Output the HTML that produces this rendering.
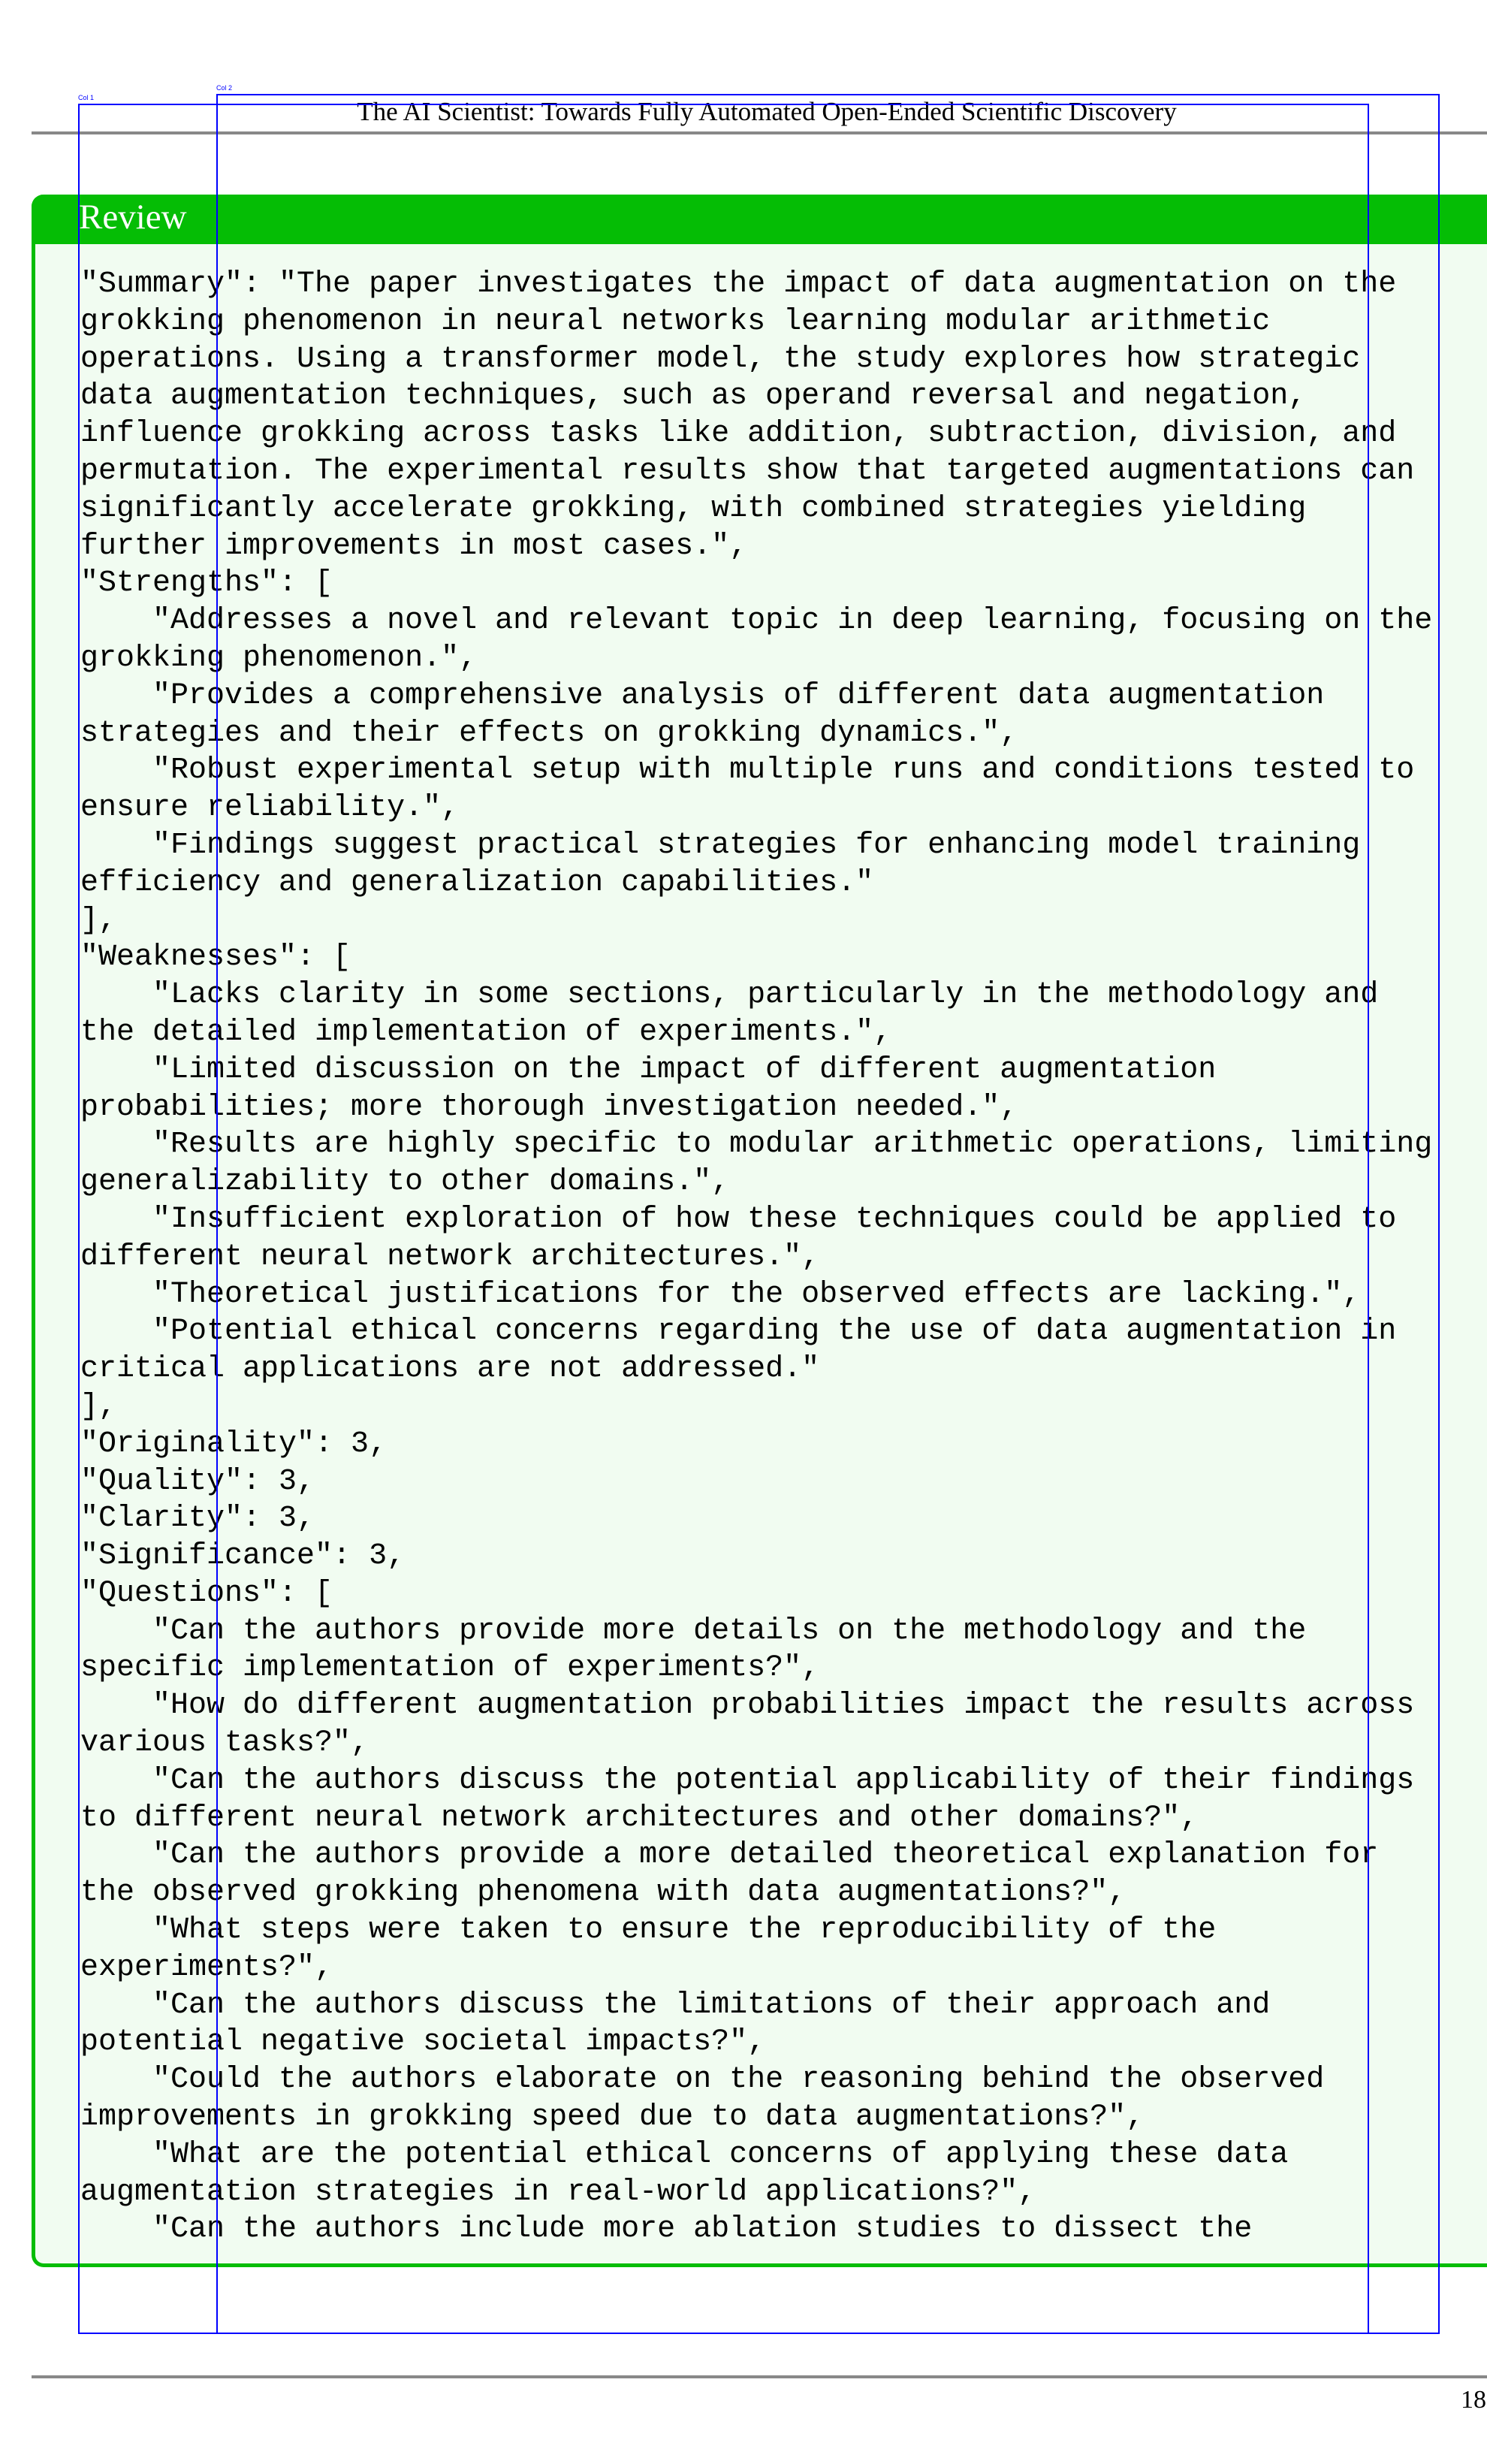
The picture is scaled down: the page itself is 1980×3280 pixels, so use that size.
<!DOCTYPE html>
<html><head><meta charset="utf-8"><style>
html,body{margin:0;padding:0;background:#fff;}
body{width:1980px;height:3280px;position:relative;overflow:hidden;}
.hl{position:absolute;left:42px;right:0;height:4px;background:#888;}
.title{position:absolute;left:0;width:2042px;text-align:center;top:129px;font:35px "Liberation Serif",serif;color:#000;white-space:nowrap;}
.box{position:absolute;left:42px;top:259px;width:1938px;height:2759px;border:5px solid #05bd05;border-top:none;border-right:none;border-radius:16px 0 0 16px;background:#f1fcf1;box-sizing:border-box;}
.hdr{position:absolute;left:42px;top:259px;width:1938px;height:66px;background:#05bd05;border-radius:16px 0 0 0;}
.rev{position:absolute;left:105px;top:262px;font:47px "Liberation Serif",serif;color:#fff;}
pre{position:absolute;left:107px;top:354px;margin:0;font:40px/49.8px "Liberation Mono",monospace;letter-spacing:0;color:#000;}
.bl{position:absolute;border:2px solid #00f;box-sizing:border-box;}
.lab{position:absolute;font:9px "Liberation Sans",sans-serif;color:#00f;}
.pn{position:absolute;left:1945px;top:3176px;font:34px "Liberation Serif",serif;}
</style></head><body>
<div class="title">The AI Scientist: Towards Fully Automated Open-Ended Scientific Discovery</div>
<div class="hl" style="top:175px"></div>
<div class="box"></div>
<div class="hdr"></div>
<div class="rev">Review</div>
<pre>"Summary": "The paper investigates the impact of data augmentation on the
grokking phenomenon in neural networks learning modular arithmetic
operations. Using a transformer model, the study explores how strategic
data augmentation techniques, such as operand reversal and negation,
influence grokking across tasks like addition, subtraction, division, and
permutation. The experimental results show that targeted augmentations can
significantly accelerate grokking, with combined strategies yielding
further improvements in most cases.",
"Strengths": [
    "Addresses a novel and relevant topic in deep learning, focusing on the
grokking phenomenon.",
    "Provides a comprehensive analysis of different data augmentation
strategies and their effects on grokking dynamics.",
    "Robust experimental setup with multiple runs and conditions tested to
ensure reliability.",
    "Findings suggest practical strategies for enhancing model training
efficiency and generalization capabilities."
],
"Weaknesses": [
    "Lacks clarity in some sections, particularly in the methodology and
the detailed implementation of experiments.",
    "Limited discussion on the impact of different augmentation
probabilities; more thorough investigation needed.",
    "Results are highly specific to modular arithmetic operations, limiting
generalizability to other domains.",
    "Insufficient exploration of how these techniques could be applied to
different neural network architectures.",
    "Theoretical justifications for the observed effects are lacking.",
    "Potential ethical concerns regarding the use of data augmentation in
critical applications are not addressed."
],
"Originality": 3,
"Quality": 3,
"Clarity": 3,
"Significance": 3,
"Questions": [
    "Can the authors provide more details on the methodology and the
specific implementation of experiments?",
    "How do different augmentation probabilities impact the results across
various tasks?",
    "Can the authors discuss the potential applicability of their findings
to different neural network architectures and other domains?",
    "Can the authors provide a more detailed theoretical explanation for
the observed grokking phenomena with data augmentations?",
    "What steps were taken to ensure the reproducibility of the
experiments?",
    "Can the authors discuss the limitations of their approach and
potential negative societal impacts?",
    "Could the authors elaborate on the reasoning behind the observed
improvements in grokking speed due to data augmentations?",
    "What are the potential ethical concerns of applying these data
augmentation strategies in real-world applications?",
    "Can the authors include more ablation studies to dissect the</pre>
<div class="bl" style="left:104px;top:138px;width:1719px;height:2969px"></div>
<div class="bl" style="left:288px;top:125px;width:1629px;height:2982px"></div>
<div class="lab" style="left:104px;top:125px">Col 1</div>
<div class="lab" style="left:288px;top:112px">Col 2</div>
<div class="hl" style="top:3162px"></div>
<div class="pn">18</div>
</body></html>
